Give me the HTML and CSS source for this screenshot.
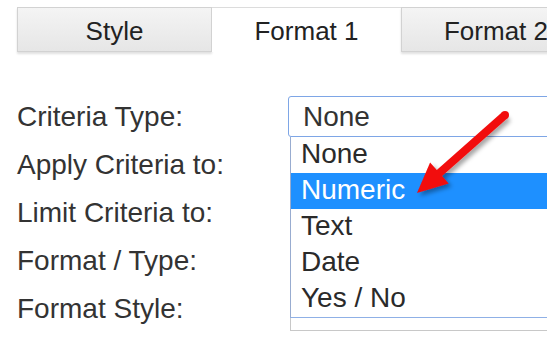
FILE: index.html
```html
<!DOCTYPE html>
<html lang="en">
<head>
    <meta charset="UTF-8">
    <title>Conditional Format - Format 1</title>
    <link rel="stylesheet" href="styles.css">
</head>
<body>
    <div class="stage">

        <div class="tabs">
            <div class="tab tab-style">Style</div>
            <div class="tab tab-active">Format 1</div>
            <div class="tab tab-format2">Format 2</div>
        </div>

        <div class="form">
            <label class="form-label">Criteria Type:</label>
            <div class="field field-select">
                <div class="select">None</div>
                <!-- lista desplegada del select -->
                <ul class="dropdown">
                    <li class="option">None</li>
                    <li class="option selected">Numeric</li>
                    <li class="option">Text</li>
                    <li class="option">Date</li>
                    <li class="option">Yes / No</li>
                </ul>
            </div>

            <label class="form-label">Apply Criteria to:</label>
            <div class="field"><div class="box"></div></div>

            <label class="form-label">Limit Criteria to:</label>
            <div class="field"><div class="box"></div></div>

            <label class="form-label">Format / Type:</label>
            <div class="field"><div class="box"></div></div>

            <label class="form-label">Format Style:</label>
            <div class="field"><div class="box box-last"></div></div>
        </div>

        <svg class="arrow" width="547" height="340" viewBox="0 0 547 340">
            <defs>
                <filter id="sombra" x="-20%" y="-20%" width="140%" height="140%">
                    <feDropShadow dx="3" dy="3" stdDeviation="2" flood-color="#000" flood-opacity="0.35"/>
                </filter>
            </defs>
            <polygon filter="url(#sombra)" fill="#f20d0d"
                points="507.7,118 502.3,112 436.8,170.1 430.1,162.6 417,193 448.7,183.6 442.1,176.1"/>
            <circle cx="505" cy="115" r="4" fill="#f20d0d"/>
        </svg>

    </div>
</body>
</html>
```

FILE: styles.css
```css
body {
    margin: 0;
    padding: 0;
    background-color: #fff;
    font-family: 'Liberation Sans', Arial, sans-serif;
    overflow: hidden;
}

.stage {
    position: relative;
    width: 547px;
    height: 340px;
    overflow: hidden;
}

/* pestañas */
.tabs {
    display: flex;
    margin: 7px 0 0 17px;
    height: 45px;
    width: 700px;
}

.tab {
    flex-shrink: 0;
    box-sizing: border-box;
    height: 45px;
    padding-top: 4px;
    line-height: 39px;
    text-align: center;
    font-size: 26px;
    color: #222;
    background: linear-gradient(#f4f4f4, #e6e6e6);
    border: 1px solid #d2d2d2;
    box-shadow: 0 2px 2px rgba(0, 0, 0, 0.12);
}

.tab-style {
    width: 195px;
}

.tab-active {
    width: 189px;
    background: #fff;
    border: none;
    border-top: 1px solid #dcdcdc;
    box-shadow: none;
}

.tab-format2 {
    width: 190px;
}

/* formulario */
.form {
    display: grid;
    grid-template-columns: 271px 320px;
    grid-auto-rows: 41px;
    row-gap: 7px;
    margin: 44px 0 0 17px;
}

.form-label {
    font-size: 28px;
    line-height: 41px;
    color: #333;
}

.field {
    position: relative;
}

.select {
    box-sizing: border-box;
    height: 41px;
    line-height: 39px;
    padding-left: 14px;
    font-size: 28px;
    color: #333;
    border: 1px solid #7ea6e6;
    border-radius: 3px;
    background: #fff;
}

.box {
    box-sizing: border-box;
    height: 41px;
    margin-left: 2px;
    border: 1px solid #c8c8c8;
    background: #fff;
}

.box-last {
    height: 43px;
}

.dropdown {
    position: absolute;
    top: 100%;
    left: 2px;
    right: 0;
    margin: 0;
    padding: 0;
    list-style: none;
    background: #fff;
    border-left: 1px solid #98acd0;
    border-bottom: 1px solid #8fb0e6;
    z-index: 10;
}

.option {
    height: 36px;
    line-height: 34px;
    padding-left: 10px;
    font-size: 28px;
    color: #2a2a2a;
}

.option.selected {
    background-color: #1e90ff;
    color: #fff;
}

.arrow {
    position: absolute;
    left: 0;
    top: 0;
    z-index: 20;
    pointer-events: none;
}
```
